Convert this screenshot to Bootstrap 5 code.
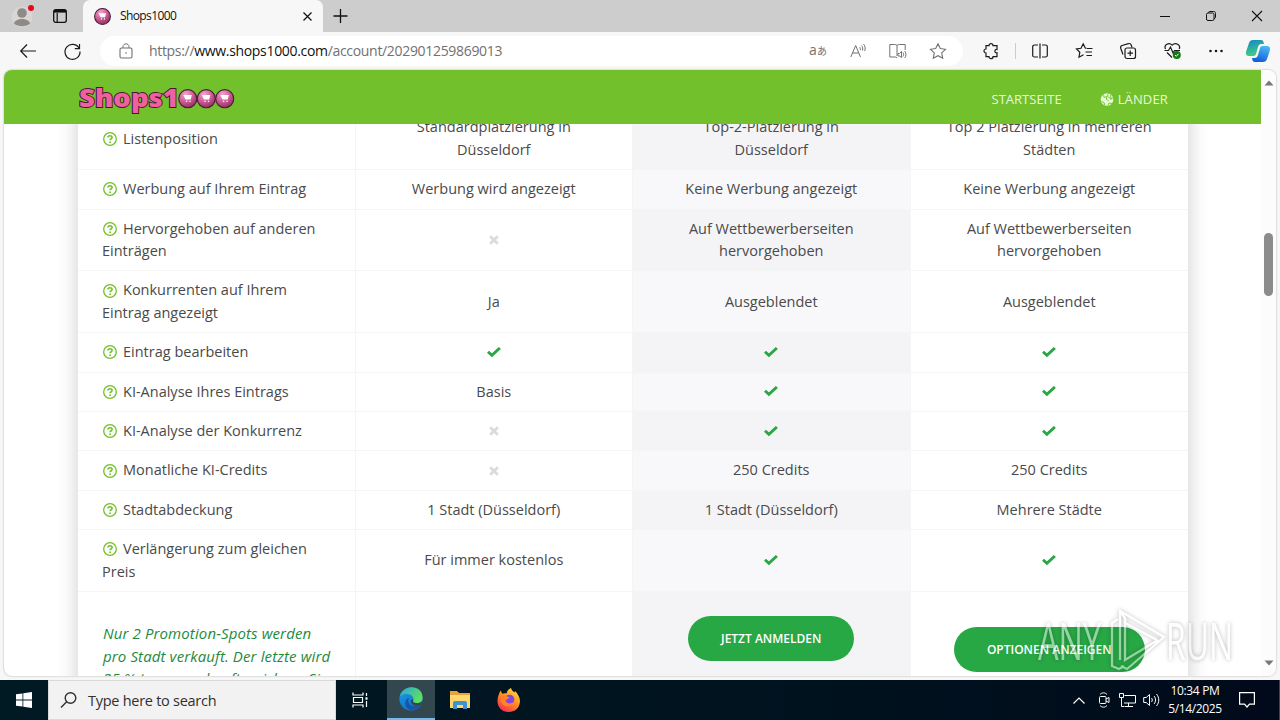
<!DOCTYPE html>
<html lang="de">
<head>
    <meta charset="UTF-8">
    <title>Shops1000</title>
    <!-- Bootstrap CSS -->
    <link href="https://cdn.jsdelivr.net/npm/bootstrap@5.3.0/dist/css/bootstrap.min.css" rel="stylesheet">
    <style>
        body {
            width: 1280px;
            height: 720px;
            overflow: hidden;
            background: #f7f7f7;
            font-family: "Open Sans", "Noto Sans", sans-serif;
            font-size: 14px;
            line-height: 1.6;
            color: #4a4a4a;
        }

        svg {
            display: block;
            flex: none;
            fill: none;
            stroke: currentColor;
            overflow: visible;
        }

        svg.solid {
            fill: currentColor;
            stroke: none;
        }

        /* Browser window */
        .tab-strip {
            height: 32px;
            background: #cdcdcd;
            color: #111;
        }

        .avatar-icon {
            margin-left: 12px;
        }

        .tabs-icon {
            margin-left: 19px;
        }

        .browser-tab {
            width: 240px;
            height: 32px;
            margin-left: 16px;
            padding: 0 11px 0 11px;
            background: #f7f7f7;
            border-radius: 7px 7px 0 0;
            font-size: 12px;
        }

        .tab-name {
            width: 183px;
            margin-left: 9px;
            letter-spacing: -.6px;
        }

        .new-tab-icon {
            margin-left: 10px;
        }

        .toolbar {
            height: 38px;
            padding: 0 10px 0 20px;
            color: #1b1b1b;
        }

        .address {
            width: 863px;
            height: 30px;
            margin-left: 19px;
            padding: 0 17px 0 19px;
            background: #fff;
            border-radius: 15px;
            color: #717171;
            font-size: 14px;
        }

        .address b {
            font-weight: 400;
            color: #111;
        }

        .url-text {
            margin-left: 16px;
            letter-spacing: -.32px;
            white-space: nowrap;
        }

        .viewport {
            width: 1272px;
            height: 606px;
            margin-left: 4px;
            border-radius: 8px;
            overflow: hidden;
            background: #fff;
            box-shadow: 0 0 2px rgba(0, 0, 0, .35);
        }

        .page {
            width: 1257px;
            height: 606px;
            overflow: hidden;
        }

        .scroll-track {
            width: 15px;
            background: #fcfcfc;
            padding: 10px 3px 10px 3px;
            color: #777;
        }

        .scroll-thumb {
            width: 9px;
            height: 63px;
            margin-top: 147px;
            border-radius: 5px;
            background: #8b8b8b;
        }

        /* Site header */
        .site-header {
            height: 54px;
            padding: 4px 93px 0 74px;
            background: #72c02c;
            z-index: 2;
        }

        .site-header a {
            color: #e6fbd5;
            font-size: 13px;
            line-height: 20px;
            text-decoration: none;
        }

        .logo-word {
            font: 800 25px "Open Sans", sans-serif;
            fill: #f0609f;
            stroke: #4a1638;
            stroke-width: 1.8px;
            paint-order: stroke;
        }

        /* Price table */
        .price-box {
            width: 1110px;
            margin: -15.6px 0 0 74px;
            background: #fff;
            box-shadow: 0 0 20px rgba(0, 0, 0, .2);
        }

        .price-table {
            width: 1110px;
            table-layout: fixed;
            border-collapse: separate;
            border-spacing: 0;
            font-size: 14.5px;
        }

        .price-table td {
            height: 39.4px;
            padding: 8px 23px;
            border-bottom: 1px solid #f5f5f6;
            border-right: 1px solid #f5f5f5;
            text-align: center;
            vertical-align: middle;
            line-height: 22.4px;
            white-space: nowrap;
        }

        .price-table td:first-child {
            padding-left: 24px;
            text-align: left;
        }

        .price-table td:last-child {
            border-right: 0;
        }

        .price-table td:nth-child(3) {
            background: #f8f8fb;
        }

        .price-table tr:nth-child(odd) td:nth-child(3) {
            background: #f4f4f7;
        }

        .price-table td svg {
            margin: 0 auto;
        }

        .price-table td:first-child svg {
            display: inline-block;
            margin: -2px 6px 0 1px;
            color: #72c02c;
        }

        .yes { color: #28a745; }
        .no { color: #d9dbdf; }

        .price-table .cta-row td {
            height: 150px;
            padding-top: 24px;
            vertical-align: top;
        }

        .price-table .cta-row td:first-child {
            padding: 30px 20px 0 25px;
            color: #1e8a3c;
            font-size: 15px;
            letter-spacing: .12px;
            font-style: italic;
        }

        .price-table .cta-row td:last-child {
            padding-top: 35px;
        }

        .cta-btn {
            height: 45px;
            padding: 0 32px;
            border-radius: 23px;
            background: #28a745;
            color: #fff;
            font-size: 12px;
            line-height: 44px;
            font-weight: 600;
        }

        .watermark {
            position: absolute;
            left: 1034px;
            top: 602px;
            filter: drop-shadow(0 0 2px rgba(0, 0, 0, .55));
            opacity: .5;
            z-index: 5;
        }

        .watermark text {
            font: 400 51px "Open Sans", sans-serif;
            fill: #fff;
            stroke: none;
        }

        /* Taskbar */
        .taskbar {
            height: 40px;
            margin-top: 4px;
            background: linear-gradient(90deg, #001a24, #00131f 60%, #000a1a);
            color: #fff;
        }

        .search-box {
            width: 288px;
            height: 40px;
            padding-left: 12px;
            background: #f2f2f2;
            border: 1px solid #dadada;
            color: #303030;
            font-size: 14.5px;
            letter-spacing: -.27px;
        }

        .search-box span {
            margin-left: 11px;
            padding-top: 1px;
        }

        .app-btn {
            width: 48px;
            height: 40px;
        }

        .app-btn.running {
            margin: 0 1px 0 3px;
            background: #33474f;
            border-bottom: 2px solid #76b9ed;
        }

        .clock {
            width: 60px;
            margin-left: 5px;
            font-size: 12px;
            line-height: 18px;
            letter-spacing: -.35px;
            white-space: nowrap;
        }
    </style>
</head>
<body>

<!-- Shared icons -->
<svg width="0" height="0" class="position-absolute">
    <defs>
        <radialGradient id="ballFill" cx=".38" cy=".25" r=".8">
            <stop offset="0" stop-color="#f3a5cd"/>
            <stop offset=".5" stop-color="#d05f98"/>
            <stop offset="1" stop-color="#8a2a5b"/>
        </radialGradient>
        <linearGradient id="edgeGreen" x1="0" y1="0" x2="1" y2=".6">
            <stop offset="0" stop-color="#2ba6dd"/>
            <stop offset="1" stop-color="#5fe25a"/>
        </linearGradient>
        <linearGradient id="edgeBlue" x1="0" y1="0" x2=".5" y2="1">
            <stop offset="0" stop-color="#1b9de2"/>
            <stop offset="1" stop-color="#1173c9"/>
        </linearGradient>
        <linearGradient id="foxFill" x1=".8" y1="0" x2=".2" y2="1">
            <stop offset="0" stop-color="#ffe03a"/>
            <stop offset=".5" stop-color="#ff8a1f"/>
            <stop offset="1" stop-color="#f5265c"/>
        </linearGradient>
        <linearGradient id="copilotLeft" x1="0" y1="0" x2=".3" y2="1">
            <stop offset="0" stop-color="#1187c9"/>
            <stop offset="1" stop-color="#42ce80"/>
        </linearGradient>
        <linearGradient id="copilotRight" x1=".6" y1="0" x2=".3" y2="1">
            <stop offset="0" stop-color="#49b6f5"/>
            <stop offset="1" stop-color="#115bd8"/>
        </linearGradient>
    </defs>
    <symbol id="ball" viewBox="0 0 20 20">
        <circle cx="10" cy="10" r="9.300" fill="url(#ballFill)" stroke="#4a1c38" stroke-width="1.200"/>
        <path d="M5.500 6.200h8.700l-1.200 4.600H7.700z" fill="#fff" stroke="none"/>
        <path d="M8.200 12.800h1.300M11.700 12.800H13" stroke="#fff" stroke-width="1.300"/>
    </symbol>
    <symbol id="help" viewBox="0 0 14 14">
        <circle cx="7" cy="7" r="6.300" stroke-width="1.300"/>
        <path d="M4.900 5.500C5 3.300 9.100 3.200 9.100 5.500 9.100 6.800 7.100 6.700 7.100 8.300" stroke-width="1.600"/>
        <path d="M7.100 9.400v1.600" stroke-width="1.700"/>
    </symbol>
    <symbol id="check" viewBox="0 0 14 11">
        <path d="M1 4.800l3.900 3.600L12.900 1" stroke-width="2.900"/>
    </symbol>
    <symbol id="cross" viewBox="0 0 10 10">
        <path d="M1.200 1.200l7.600 7.600M8.800 1.200L1.200 8.800" stroke-width="2.800"/>
    </symbol>
</svg>

<!-- Tab strip -->
<div class="tab-strip d-flex align-items-center">
    <svg width="22" height="22" class="solid avatar-icon" viewBox="0 0 22 22">
        <circle cx="10" cy="12" r="10.500" fill="#d9d6d4"/>
        <circle cx="10" cy="8" r="4.800" fill="#8d8a88"/>
        <path d="M2 18.500c1-6 15-6 16 0-4 3.500-12 3.500-16 0z" fill="#8d8a88"/>
        <circle cx="19" cy="3" r="3" fill="#e00b1c"/>
    </svg>
    <svg width="14" height="14" class="tabs-icon" viewBox="0 0 14 14" stroke-width="1.300">
        <rect x=".7" y=".7" width="12.600" height="12.600" rx="2"/>
        <path d="M1 2.300h12" stroke-width="2.600"/>
        <path d="M4.200 4v9" stroke-width="1.200"/>
    </svg>
    <div class="browser-tab d-flex align-items-center">
        <svg width="17" height="17"><use href="#ball"/></svg>
        <span class="tab-name me-auto">Shops1000</span>
        <svg width="9" height="9" viewBox="0 0 9 9" stroke-width="1.200"><path d="M.5.5l8 8M8.500.5l-8 8"/></svg>
    </div>
    <svg width="14" height="14" class="new-tab-icon me-auto" viewBox="0 0 14 14" stroke-width="1.300"><path d="M7.500 0v14M.5 7h14"/></svg>
    <div class="d-flex align-items-center me-3 pe-1">
        <svg width="10" height="10" viewBox="0 0 10 10"><path d="M1 5.500h10"/></svg>
        <svg width="10" height="10" style="margin-left:37px" viewBox="0 0 10 10"><rect x=".5" y="2" width="7.500" height="7.500" rx="1.500"/><path d="M2.500 2C2.500.8 3 .5 4 .5h3.500c1.500 0 2 .5 2 2V6c0 1-.3 1.500-1.500 1.500"/></svg>
        <svg width="10" height="10" style="margin-left:36px;margin-right:-2px" viewBox="0 0 10 10" stroke-width="1.100"><path d="M0 0l10 10M10 0L0 10"/></svg>
    </div>
</div>

<!-- Toolbar -->
<div class="toolbar d-flex align-items-center">
    <svg width="16" height="14" viewBox="0 0 16 14" stroke-width="1.200"><path d="M.7 7H16M7 .5L.7 7 7 13.500"/></svg>
    <svg width="17" height="17" style="margin-left:28px" viewBox="0 0 17 17" stroke-width="1.200"><path d="M15.200 5.500A7.500 7.500 0 1 0 16 8.500M15.500 1v4.700h-4.700"/></svg>
    <div class="address d-flex align-items-center">
        <svg width="14" height="16" viewBox="0 0 14 16"><rect x="1" y="5" width="12" height="10" rx="1.500" stroke-width="1.100"/><path d="M4 5V3.500c0-3.500 6-3.500 6 0V5"/><circle cx="7" cy="10" r=".8" fill="currentColor" stroke="none"/></svg>
        <div class="url-text me-auto">https://<b>www.shops1000.com</b>/account/202901259869013</div>
        <svg width="18" height="14" class="solid" viewBox="0 0 18 14"><text x="0" y="11" font-size="14">a</text><text x="8" y="11" font-size="10" font-family="Noto Sans CJK JP, sans-serif">あ</text></svg>
        <svg width="16" height="16" style="margin-left:23px" viewBox="0 0 16 16"><path d="M.8 14L5.700 2.500 10.500 14M2.500 10h6.300M9.500 4c.8.8 1 1.500.8 3M11.500 2.500c1.300 1.300 1.500 3 1 5M13.500 1c1.800 2 2 4.500 1.200 7"/></svg>
        <svg width="18" height="16" style="margin-left:23px" viewBox="0 0 18 16"><path d="M8 13V2.500C7.500 1.700 6.500 1.500 5.500 1.500H.8v12.500h5.700l1.500.8M8 2.500c.5-.8 1.500-1 2.500-1h5.700V7M9 10.500h1.500l2-2v6l-2-1.500H9zM14 9.500c.8 1 .8 3 0 4M15.800 8c1.500 2 1.500 5 0 7"/></svg>
        <svg width="16" height="16" style="margin-left:23px" viewBox="0 0 16 16" stroke-width="1.100"><path d="M8 .8l2.300 4.800 5.200.7-3.800 3.600 1 5.300L8 12.700l-4.700 2.500 1-5.300L.5 6.300l5.200-.7z"/></svg>
    </div>
    <svg width="16" height="16" style="margin-left:20px" viewBox="0 0 16 16" stroke-width="1.200"><path d="M6 2.700a2 2 0 0 1 4 0h4v3.800a1.700 1.700 0 1 0 0 3.300v3.900h-4a2 2 0 0 1-4 0H3V10a2 2 0 0 1 0-4V2.700z"/></svg>
    <svg width="1" height="16" style="margin-left:16px" viewBox="0 0 1 16"><path d="M.5 0v16" stroke="#ccc"/></svg>
    <svg width="16" height="16" style="margin-left:16px" viewBox="0 0 16 16" stroke-width="1.200"><path d="M6 2H2.500C1.500 2 .7 2.700.7 3.500v9c0 .8.800 1.500 1.800 1.500H6M10 2h3.500c1 0 1.800.7 1.800 1.500v9c0 .8-.8 1.500-1.800 1.500H10M8 .5v15"/></svg>
    <svg width="17" height="16" style="margin-left:28px" viewBox="0 0 17 16" stroke-width="1.200"><path d="M10.500 5.500L9.300 5 7.200.8 5 5.300l-4.500.7 3.300 3.200-.8 5 4.500-2.500M11 5.500h5.500M9.500 9H16M10.500 12.500H16"/></svg>
    <svg width="16" height="16" style="margin-left:27px" viewBox="0 0 16 16" stroke-width="1.200"><rect x="5" y="5" width="10.500" height="10.500" rx="2"/><path d="M3 11.500L.8 5.500C.3 4 .8 3 2 2.500L8.500.7c1.500-.5 2.300 0 2.800 1.500L12 4.500M10.200 7.500v5.500M7.500 10.200H13"/></svg>
    <svg width="17" height="16" style="margin-left:28px" viewBox="0 0 17 16" stroke-width="1.200"><path d="M.5 7.500h4l2-3.500 2.500 6 1.500-2.500H16M1.500 6C-.5 2 5-1.500 8.200 2.200 11.500-1.500 17 2 15.200 6M3 9.500l5 5"/><circle cx="12.800" cy="12" r="4" fill="#0f7b10" stroke="none"/><path d="M11 12l1.300 1.300 2.300-2.500" stroke="#fff" stroke-width="1"/></svg>
    <svg width="14" height="4" class="solid" style="margin-left:28px" viewBox="0 0 14 4"><circle cx="1.500" cy="2" r="1.300"/><circle cx="7" cy="2" r="1.300"/><circle cx="12.500" cy="2" r="1.300"/></svg>
    <svg width="24" height="22" class="solid" style="margin-left:23px" viewBox="0 0 24 22">
        <path d="M7 0h8c2 0 2.500 1.500 3 4h-2.500c-2 0-3 1-3.500 3l-2 7c-.5 1.500-1.500 2-3 2H3c-3 0-3.500-2.500-2.700-5L3 3c.6-2 2-3 4-3z" fill="url(#copilotLeft)"/>
        <path d="M17 22H9c-2 0-2.500-1.500-3-4h2.500c2 0 3-1 3.500-3l2-7c.5-1.500 1.500-2 3-2h4c3 0 3.500 2.500 2.700 5L21 19c-.6 2-2 3-4 3z" fill="url(#copilotRight)"/>
    </svg>
</div>

<!-- Page -->
<div class="viewport d-flex">
    <div class="page">
        <header class="site-header d-flex align-items-center position-relative">
            <svg width="158" height="32" viewBox="0 0 158 32">
                <text class="logo-word" x="1" y="24" textLength="100" lengthAdjust="spacingAndGlyphs">Shops1</text>
                <use href="#ball" x="100" y="6" width="19.500" height="19.500"/>
                <use href="#ball" x="118.500" y="6" width="19.500" height="19.500"/>
                <use href="#ball" x="137" y="6" width="19.500" height="19.500"/>
            </svg>
            <a href="#" class="ms-auto">STARTSEITE</a>
            <a href="#" class="d-flex align-items-center" style="margin-left:39px">
                <svg width="13" height="13" style="margin-right:4px" viewBox="0 0 13 13"><circle cx="6" cy="6.500" r="6.300" fill="#e6fbd5" stroke="none"/><path d="M2.500 1.500l.5 3 2.500-1v3l2 1M7 .5l-.5 3 3 2 3-.5M4 12.500l-1-3-2.500-1M7 12.500l1-2.500 3.500.5M9.500 2l.5 5" stroke="#72c02c" stroke-width=".9"/></svg>
                <span style="letter-spacing:.15px">LÄNDER</span>
            </a>
        </header>

        <div class="price-box">
            <table class="price-table">
                <tr>
                    <td><svg width="14" height="14"><use href="#help"/></svg>Listenposition</td>
                    <td>Standardplatzierung in<br>Düsseldorf</td>
                    <td>Top-2-Platzierung in<br>Düsseldorf</td>
                    <td>Top 2 Platzierung in mehreren<br>Städten</td>
                </tr>
                <tr>
                    <td><svg width="14" height="14"><use href="#help"/></svg>Werbung auf Ihrem Eintrag</td>
                    <td>Werbung wird angezeigt</td>
                    <td>Keine Werbung angezeigt</td>
                    <td>Keine Werbung angezeigt</td>
                </tr>
                <tr>
                    <td><svg width="14" height="14"><use href="#help"/></svg>Hervorgehoben auf anderen<br>Einträgen</td>
                    <td><svg class="no" width="10" height="10"><use href="#cross"/></svg></td>
                    <td>Auf Wettbewerberseiten<br>hervorgehoben</td>
                    <td>Auf Wettbewerberseiten<br>hervorgehoben</td>
                </tr>
                <tr>
                    <td><svg width="14" height="14"><use href="#help"/></svg>Konkurrenten auf Ihrem<br>Eintrag angezeigt</td>
                    <td>Ja</td>
                    <td>Ausgeblendet</td>
                    <td>Ausgeblendet</td>
                </tr>
                <tr>
                    <td><svg width="14" height="14"><use href="#help"/></svg>Eintrag bearbeiten</td>
                    <td><svg class="yes" width="14" height="11"><use href="#check"/></svg></td>
                    <td><svg class="yes" width="14" height="11"><use href="#check"/></svg></td>
                    <td><svg class="yes" width="14" height="11"><use href="#check"/></svg></td>
                </tr>
                <tr>
                    <td><svg width="14" height="14"><use href="#help"/></svg>KI-Analyse Ihres Eintrags</td>
                    <td>Basis</td>
                    <td><svg class="yes" width="14" height="11"><use href="#check"/></svg></td>
                    <td><svg class="yes" width="14" height="11"><use href="#check"/></svg></td>
                </tr>
                <tr>
                    <td><svg width="14" height="14"><use href="#help"/></svg>KI-Analyse der Konkurrenz</td>
                    <td><svg class="no" width="10" height="10"><use href="#cross"/></svg></td>
                    <td><svg class="yes" width="14" height="11"><use href="#check"/></svg></td>
                    <td><svg class="yes" width="14" height="11"><use href="#check"/></svg></td>
                </tr>
                <tr>
                    <td><svg width="14" height="14"><use href="#help"/></svg>Monatliche KI-Credits</td>
                    <td><svg class="no" width="10" height="10"><use href="#cross"/></svg></td>
                    <td>250 Credits</td>
                    <td>250 Credits</td>
                </tr>
                <tr>
                    <td><svg width="14" height="14"><use href="#help"/></svg>Stadtabdeckung</td>
                    <td>1 Stadt (Düsseldorf)</td>
                    <td>1 Stadt (Düsseldorf)</td>
                    <td>Mehrere Städte</td>
                </tr>
                <tr>
                    <td><svg width="14" height="14"><use href="#help"/></svg>Verlängerung zum gleichen<br>Preis</td>
                    <td>Für immer kostenlos</td>
                    <td><svg class="yes" width="14" height="11"><use href="#check"/></svg></td>
                    <td><svg class="yes" width="14" height="11"><use href="#check"/></svg></td>
                </tr>
                <tr class="cta-row">
                    <td>Nur 2 Promotion-Spots werden<br>pro Stadt verkauft. Der letzte wird<br>25 % teurer verkauft – sichern Sie</td>
                    <td></td>
                    <td><a href="#" class="btn cta-btn">JETZT ANMELDEN</a></td>
                    <td><a href="#" class="btn cta-btn">OPTIONEN ANZEIGEN</a></td>
                </tr>
            </table>
        </div>
    </div>
    <div class="scroll-track d-flex flex-column">
        <svg width="10" height="6" class="solid" viewBox="0 0 10 6"><path d="M.5 5.500L5 .5l4.500 5z"/></svg>
        <div class="scroll-thumb"></div>
        <svg width="10" height="6" class="solid mt-auto" viewBox="0 0 10 6"><path d="M.5 .5l4.500 5 4.500-5z"/></svg>
    </div>
</div>

<!-- Watermark over the page -->
<svg class="watermark" width="204" height="76" viewBox="0 0 204 76">
    <text x="4" y="58" textLength="63" lengthAdjust="spacingAndGlyphs">ANY</text>
    <path d="M84 17l-6 4v43l7 3 5-3M86 58V9l44 26-37 32-6-3M86 9l5 7v42l33-20M91 21l32 17" stroke="#fff" stroke-width="2.300"/>
    <text x="132" y="58" textLength="67" lengthAdjust="spacingAndGlyphs">RUN</text>
</svg>

<!-- Taskbar -->
<div class="taskbar d-flex align-items-center">
    <div class="app-btn d-flex align-items-center justify-content-center">
        <svg width="16" height="16" class="solid" viewBox="0 0 16 16"><path d="M0 2.300L6.500 1.400v6.200H0zM7.300 1.300L16 0v7.600H7.300zM0 8.400h6.500v6.200L0 13.700zM7.300 8.400H16V16l-8.700-1.300z"/></svg>
    </div>
    <div class="search-box d-flex align-items-center">
        <svg width="16" height="16" viewBox="0 0 16 16" stroke-width="1.400"><circle cx="9.500" cy="6" r="5.300"/><path d="M5.700 9.800L0 15.500"/></svg>
        <span>Type here to search</span>
    </div>
    <div class="app-btn d-flex align-items-center justify-content-center">
        <svg width="16" height="16" viewBox="0 0 16 16" stroke-width="1.200"><path d="M1 .5V3h10V.5M1 15.500V13h10v2.500M1.500 5.500h9v5h-9zM14.500 1v3M14.500 9v6"/><path d="M13.500 6.500h2" stroke-width="2.500"/></svg>
    </div>
    <div class="app-btn running d-flex align-items-center justify-content-center">
        <svg width="24" height="24" class="solid" viewBox="0 0 24 24">
            <circle cx="12" cy="12" r="11.600" fill="url(#edgeBlue)"/>
            <path d="M1 9C4-3 24-3 23.600 11c0 4-4.600 6.500-8.600 4.500-1.500-.8-1-1.500-.6-2.500C15.500 8 8 4.500 1 9z" fill="url(#edgeGreen)"/>
            <path d="M10 10.500c-3 7 4 11 12 7-3 5-8 6.500-12 5-5-3-5-10 0-12z" fill="#1556a6"/>
            <path d="M14.400 13c-.4 1-.9 1.700.6 2.500 2.500 1.300 5.500.8 7.500-.5l1 .8-1.700 2c-5 2.500-9.800 0-10-3.500 0-1.500 1-2.300 2.600-1.300z" fill="#33474f"/>
        </svg>
    </div>
    <div class="app-btn d-flex align-items-center justify-content-center">
        <svg width="22" height="20" class="solid" viewBox="0 0 22 20">
            <path d="M1 1h7l2 2h11v6H1z" fill="#e8a33a"/>
            <path d="M1 5h20v13H1z" fill="#fed86b"/>
            <path d="M4 19v-6c0-1 .7-2 2-2h10c1.300 0 2 1 2 2v6h-4v-4H8v4z" fill="#3d94d1"/>
        </svg>
    </div>
    <div class="app-btn d-flex align-items-center justify-content-center">
        <svg width="23" height="24" class="solid" viewBox="0 0 23 24">
            <path d="M3.500 2.500l1.800 3.300C7 5 8 5 9.500 5.500 10 3 11.500 1 14 0c.5 2.500 2 3 3.500 4.500L18 3c3 3 5 6.500 5 10.500C22.500 20 18 24 11.500 24S.5 19.500.5 13C.5 9 2 6 3.500 2.500z" fill="url(#foxFill)"/>
            <circle cx="12.500" cy="11.500" r="4.800" fill="#8445e0"/>
            <path d="M4 8c3-1 5.500 0 8.500 1.500-1 2-3.500 1.500-4 3 1 3 5 4 8 1.500-1.500 6-12 6-12.500-2z" fill="#ff8426"/>
        </svg>
    </div>
    <div class="d-flex align-items-center ms-auto">
        <svg width="12" height="7" viewBox="0 0 12 7" stroke-width="1.200"><path d="M.5 6.500L6 1l5.500 5.500"/></svg>
        <svg width="12" height="16" style="margin-left:13px" viewBox="0 0 12 16"><rect x="1.500" y="4.500" width="6.500" height="7" rx="1"/><path d="M8 7l3-1.500v5L8 9M2 2.500C4 .3 7 .3 9 2.500M2 13.500c2 2.200 5 2.200 7 0"/></svg>
        <svg width="17" height="14" style="margin-left:9px" viewBox="0 0 17 14"><path d="M5.500 2.500h11v7.500H5M9.500 10v3M6 13.500h8M.5.500h4v4h-4zM2.500 4.500v9h3"/></svg>
        <svg width="17" height="14" style="margin-left:7px" viewBox="0 0 17 14"><path d="M.7 4.500h2.500L6.500 1.500v11L3.200 9.500H.7zM8.500 5c1 1 1 3 0 4M11 3c2 2.200 2 5.800 0 8M13.500 1c3 3.500 3 8.500 0 12"/></svg>
        <div class="clock text-center">10:34 PM<br>5/14/2025</div>
        <svg width="16" height="16" style="margin:0 24px 0 14px" viewBox="0 0 16 16" stroke-width="1.200"><path d="M.6.6h14.800v11.500H10.500L8 15l-2.500-2.900H.6z"/></svg>
        <svg width="1" height="40" viewBox="0 0 1 40"><path d="M.5 0v40" stroke="#3c4653"/></svg>
    </div>
</div>

<!-- Bootstrap JS -->
<script src="https://cdn.jsdelivr.net/npm/bootstrap@5.3.0/dist/js/bootstrap.bundle.min.js"></script>

</body>
</html>
